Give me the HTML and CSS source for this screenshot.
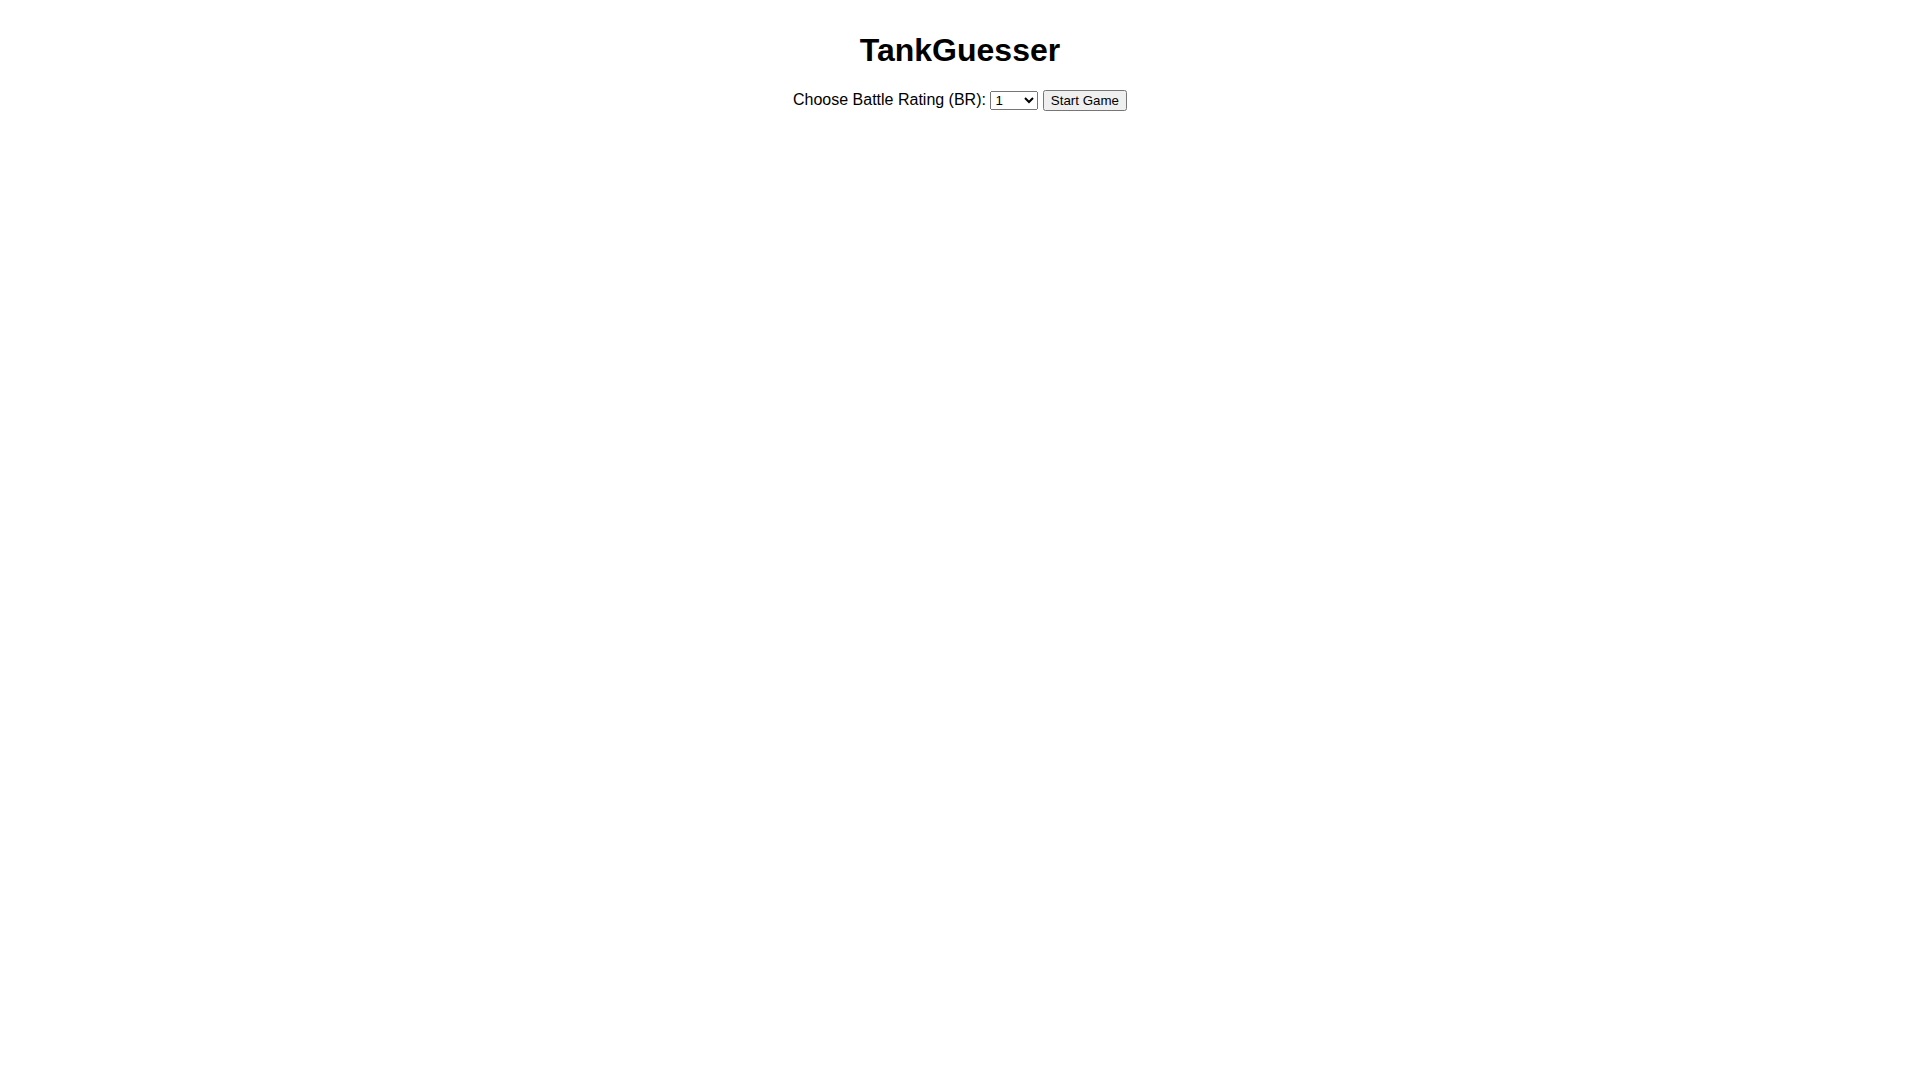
FILE: index.html
```html
<!DOCTYPE html>
<html>
<head>
<meta charset="utf-8">
<title>TankGuesser</title>
<link rel="stylesheet" href="styles.css">
</head>
<body>
<h1 class="title">TankGuesser</h1>
<div class="controls">
  <label for="br" class="label">Choose Battle Rating (BR):</label>
  <select id="br" class="br-select">
    <option>1</option>
    <option>2</option>
    <option>3</option>
    <option>4</option>
    <option>5</option>
    <option>6</option>
    <option>7</option>
    <option>8</option>
    <option>9</option>
    <option>10</option>
    <option>11</option>
  </select>
  <button class="start-btn">Start Game</button>
</div>
</body>
</html>
```
FILE: styles.css
```css
body {
  margin: 11px 8px 8px;
  font-family: "Liberation Sans", Arial, sans-serif;
  text-align: center;
  background: #fff;
  color: #000;
}
.title {
  font-size: 32px;
  margin: 21.44px 0 20.7px;
}
.br-select {
  width: 48px;
  font-family: "Liberation Sans", Arial, sans-serif;
}
.start-btn {
  font-family: "Liberation Sans", Arial, sans-serif;
}
```
